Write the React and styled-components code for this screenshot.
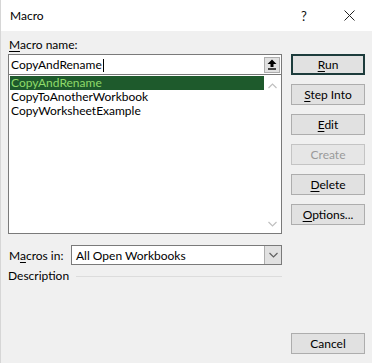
import React from 'react';
import styled, { createGlobalStyle } from 'styled-components';

const Global = createGlobalStyle`
  html, body {
    margin: 0;
    padding: 0;
    background: #f0f0f0;
  }
  body {
    font-family: Lato, "Open Sans", "Liberation Sans", sans-serif;
    font-size: 12px;
    color: #000;
  }
`;

const Dialog = styled.div`
  width: 372px;
  height: 363px;
  box-sizing: border-box;
  border-left: 1px solid #d6d6d6;
  display: flex;
  flex-direction: column;
  background: #f0f0f0;
  overflow: hidden;
`;

const TitleBar = styled.div`
  height: 31px;
  flex: none;
  background: #fff;
  display: flex;
  align-items: center;
  padding-left: 9px;
  font-size: 12px;
`;

const TitleText = styled.div`
  flex: 1;
`;

const TitleIcon = styled.div`
  width: ${p => p.w}px;
  margin-right: ${p => p.gap || 0}px;
  display: flex;
  justify-content: center;
  align-items: center;
  font-size: 13px;
  color: #111;
`;

const Body = styled.div`
  flex: 1;
  display: grid;
  grid-template-columns: 274px 74px;
  column-gap: 9px;
  padding: 6px 0 0 7px;
`;

const Left = styled.div`
  display: flex;
  flex-direction: column;
`;

const Label = styled.div`
  height: 17px;
  line-height: 15px;
  padding-left: 1px;
`;

const Key = styled.span`
  text-decoration: underline;
  text-underline-offset: 2px;
`;

const NameBox = styled.div`
  height: 19px;
  border: 1px solid #7a7a7a;
  border-bottom: none;
  background: #fff;
  display: flex;
  align-items: center;
  justify-content: space-between;
  padding-left: 2px;
`;

const Caret = styled.span`
  display: inline-block;
  width: 1px;
  height: 13px;
  background: #000;
  vertical-align: middle;
  margin-left: 1px;
`;

const UpButton = styled.div`
  width: 14px;
  height: 14px;
  margin-right: 1px;
  border: 1px solid #adadad;
  background: #e1e1e1;
  display: flex;
  align-items: center;
  justify-content: center;
`;

const ListBox = styled.div`
  height: 160px;
  border: 1px solid #7a7a7a;
  background: #fff;
  display: flex;
  box-sizing: border-box;
`;

const Items = styled.div`
  flex: 1;
  padding: 1px 0 0 1px;
`;

const Item = styled.div`
  height: 14px;
  line-height: 14px;
  padding-left: 1px;
  background: ${p => (p.selected ? '#1e5a2c' : 'transparent')};
  color: ${p => (p.selected ? '#8fdb6a' : '#000')};
`;

const ScrollTrack = styled.div`
  width: 17px;
  display: flex;
  flex-direction: column;
  justify-content: space-between;
  align-items: center;
  padding: 8px 0 6px;
`;

const Right = styled.div`
  display: flex;
  flex-direction: column;
  padding-top: 17px;
  gap: 9px;
`;

const Button = styled.div`
  height: 21px;
  box-sizing: border-box;
  border: ${p => (p.primary ? '2px solid' : '1px solid')};
  border-color: ${p => (p.disabled ? '#c4c4c4' : p.primary ? '#1d3c3c' : '#adadad')};
  background: ${p => (p.disabled ? '#e6e6e6' : '#e1e1e1')};
  color: ${p => (p.disabled ? '#9a9a9a' : '#000')};
  display: flex;
  align-items: center;
  justify-content: center;
  line-height: 1;
`;

const MacrosRow = styled.div`
  margin-top: 11px;
  display: flex;
  align-items: center;
  width: 274px;
`;

const RowLabel = styled.div`
  width: 62px;
  padding-left: 1px;
`;

const Select = styled.div`
  flex: 1;
  height: 20px;
  box-sizing: border-box;
  border: 1px solid #7a7a7a;
  background: #fff;
  display: flex;
  align-items: center;
  padding-left: 4px;
`;

const SelectText = styled.div`
  flex: 1;
`;

const DropButton = styled.div`
  width: 16px;
  height: 18px;
  background: #e1e1e1;
  border-left: 1px solid #adadad;
  display: flex;
  align-items: center;
  justify-content: center;
`;

const DescRow = styled.div`
  margin-top: 3px;
  display: flex;
  align-items: center;
  width: 274px;
`;

const Rule = styled.div`
  flex: 1;
  height: 1px;
  background: #dcdcdc;
  margin-left: 7px;
  margin-top: 1px;
`;

const Footer = styled.div`
  grid-column: 2;
  align-self: end;
  margin-bottom: 9px;
`;

const Chevron = ({ dir, color = '#c0c0c0' }) => (
  <svg width="9" height="6" viewBox="0 0 9 6">
    <path
      d={dir === 'up' ? 'M0.5 5 L4.5 1 L8.5 5' : 'M0.5 1 L4.5 5 L8.5 1'}
      fill="none"
      stroke={color}
      strokeWidth="1.2"
    />
  </svg>
);

const items = ['CopyAndRename', 'CopyToAnotherWorkbook', 'CopyWorksheetExample'];

export default function App() {
  return (
    <>
      <Global />
      <Dialog>
        <TitleBar>
          <TitleText>Macro</TitleText>
          <TitleIcon w={24} gap={10}>?</TitleIcon>
          <TitleIcon w={46}>
            <svg width="11" height="11" viewBox="0 0 11 11">
              <path d="M0.5 0.5 L10.5 10.5 M10.5 0.5 L0.5 10.5" stroke="#222" strokeWidth="1" />
            </svg>
          </TitleIcon>
        </TitleBar>
        <Body>
          <Left>
            <Label>
              <Key>M</Key>acro name:
            </Label>
            <NameBox>
              <span>
                CopyAndRename
                <Caret />
              </span>
              <UpButton>
                <svg width="10" height="11" viewBox="0 0 10 11">
                  <path d="M5 0.5 L9.5 5 L6.5 5 L6.5 8 L3.5 8 L3.5 5 L0.5 5 Z" fill="#000" />
                  <rect x="1" y="9.3" width="8" height="1.4" fill="#000" />
                </svg>
              </UpButton>
            </NameBox>
            <ListBox>
              <Items>
                {items.map((name, i) => (
                  <Item key={name} selected={i === 0}>
                    {name}
                  </Item>
                ))}
              </Items>
              <ScrollTrack>
                <Chevron dir="up" />
                <Chevron dir="down" />
              </ScrollTrack>
            </ListBox>
            <MacrosRow>
              <RowLabel>
                M<Key>a</Key>cros in:
              </RowLabel>
              <Select>
                <SelectText>All Open Workbooks</SelectText>
                <DropButton>
                  <Chevron dir="down" color="#606060" />
                </DropButton>
              </Select>
            </MacrosRow>
            <DescRow>
              Description
              <Rule />
            </DescRow>
          </Left>
          <Right>
            <Button primary>
              <span><Key>R</Key>un</span>
            </Button>
            <Button>
              <span><Key>S</Key>tep Into</span>
            </Button>
            <Button>
              <span><Key>E</Key>dit</span>
            </Button>
            <Button disabled>Create</Button>
            <Button>
              <span><Key>D</Key>elete</span>
            </Button>
            <Button>
              <span><Key>O</Key>ptions...</span>
            </Button>
          </Right>
          <Footer>
            <Button>Cancel</Button>
          </Footer>
        </Body>
      </Dialog>
    </>
  );
}
